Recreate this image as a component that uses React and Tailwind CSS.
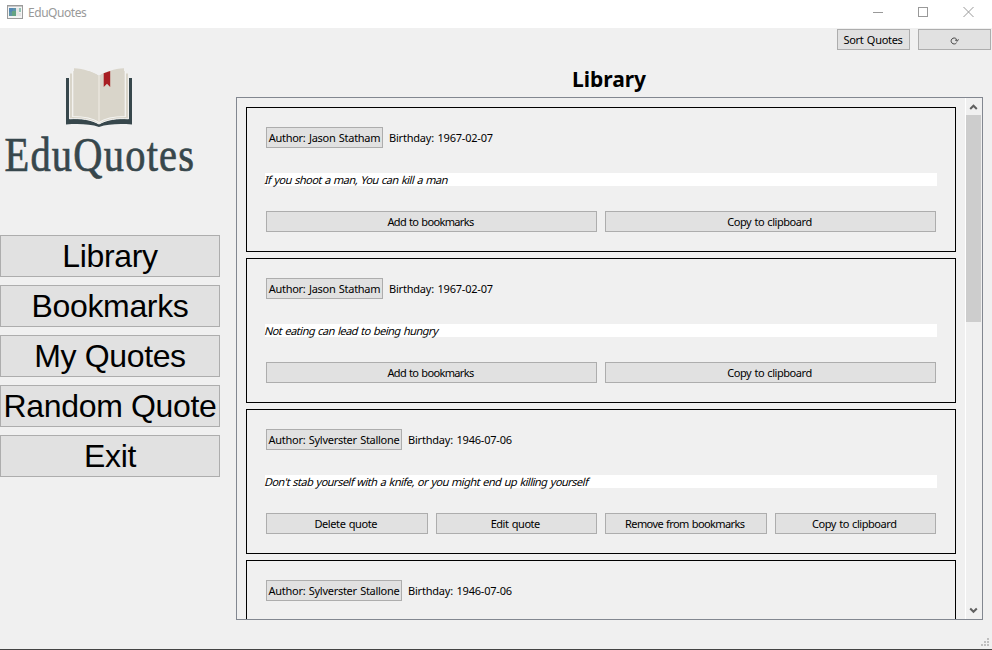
const NAV = ["Library", "Bookmarks", "My Quotes", "Random Quote", "Exit"];

const ADD = { label: "Add to bookmarks", tracking: "tracking-[-0.65px]" };
const COPY = { label: "Copy to clipboard", tracking: "tracking-[-0.45px]" };
const OWN = [
  { label: "Delete quote", tracking: "tracking-[-0.4px]" },
  { label: "Edit quote", tracking: "tracking-[-0.45px]" },
  { label: "Remove from bookmarks", tracking: "tracking-[-0.6px]" },
  COPY,
];

const QUOTES = [
  { author: "Jason Statham", width: "w-[117px]", birthday: "1967-02-07", text: "If you shoot a man, You can kill a man", actions: [ADD, COPY] },
  { author: "Jason Statham", width: "w-[117px]", birthday: "1967-02-07", text: "Not eating can lead to being hungry", actions: [ADD, COPY] },
  { author: "Sylverster Stallone", width: "w-[136px]", birthday: "1946-07-06", text: "Don't stab yourself with a knife, or you might end up killing yourself", actions: OWN },
  { author: "Sylverster Stallone", width: "w-[136px]", birthday: "1946-07-06", text: "", actions: [] },
];

function Button({ className = "", children }) {
  return (
    <button className={`flex h-[21px] items-center justify-center whitespace-nowrap border border-[#adadad] bg-[#e1e1e1] [word-spacing:0.8px] ${className}`}>
      {children}
    </button>
  );
}

function TitleBar() {
  return (
    <header className="flex h-7 shrink-0 items-start bg-white">
      <svg className="ml-[7px] mt-[5px] shrink-0" width="16" height="14" viewBox="0 0 16 14" shapeRendering="crispEdges">
        <rect x="0.5" y="0.5" width="15" height="13" fill="#f4f4f4" stroke="#9b9b9b" />
        <rect x="1" y="1" width="14" height="1" fill="#c9c9c9" />
        <rect x="2" y="3" width="8" height="8" fill="#5f93a8" />
        <rect x="2" y="3" width="4" height="4" fill="#5387b5" />
        <rect x="5" y="6" width="4" height="5" fill="#64a383" />
        <rect x="9" y="3" width="3" height="8" fill="#e6e6e6" />
        <rect x="12" y="3" width="2" height="4" fill="#93c3b5" />
        <rect x="12" y="8" width="2" height="3" fill="#e3e3e3" />
      </svg>
      <span className="ml-[5px] mt-[5px] text-[12px] leading-4 tracking-[-0.45px] text-[#999999]">EduQuotes</span>
      <svg className="ml-auto mt-[6px]" width="120" height="12" viewBox="0 0 120 12" fill="none" stroke="#999999">
        <path d="M1 6.5H11" />
        <rect x="46.500" y="1.500" width="9" height="9" />
        <path d="M91.500 1L101.500 11M101.500 1L91.500 11" />
      </svg>
    </header>
  );
}

function Logo() {
  return (
    <svg className="mt-[38px] block" width="220" height="120" viewBox="0 66 220 120">
      <path d="M66 78H69V119C80 118 91 119.500 99 124C107 119.500 118 118 129 119V78H132V124.500C119 123.500 108 124 99 127C90 124 79 123.500 66 124.500Z" fill="#37474c" />
      <path d="M69.500 73H128.500V118.800C117 118 107 119.500 99 124C91 119.500 81 118 69.500 118.800Z" fill="#d9d5ca" stroke="#f0f0ef" strokeWidth="1" />
      <path d="M72.700 71V116.500C83 116.500 92 117.500 99 122.500C106 117.500 115 116.500 125.300 116.500V71" fill="#d9d5ca" stroke="#f5f5f3" strokeWidth="1.200" />
      <path d="M72 66H126V68.300H124C114 69 106 71.500 99 76C92 71.500 84 69 74 68.300H72Z" fill="#f0f0f0" />
      <path d="M74 68.300C84 69 92 71.500 99 76C106 71.500 114 69 124 68.300V114.300C114 115 106 117 99 121.300C92 117 84 115 74 114.300Z" fill="#d9d5ca" />
      <path d="M99 76V121" stroke="#e8e5dd" strokeWidth="1.500" />
      <path d="M103.700 73.200L110.200 71V87L107 83.800L103.700 87Z" fill="#a81e22" />
      <text transform="translate(4.500 170.500) scale(0.825 1)" fontSize="49" fill="#37474c" stroke="#37474c" strokeWidth="0.700" className="font-['Liberation_Serif',serif] tracking-[1.5px]">
        EduQuotes
      </text>
    </svg>
  );
}

function QuoteCard({ quote }) {
  return (
    <article className="flex h-[145px] shrink-0 flex-col border border-black px-[18px] pt-[19px]">
      <div className="flex h-[21px] items-center gap-[6px] pl-px">
        <Button className={`tracking-[-0.28px] ${quote.width}`}>Author: {quote.author}</Button>
        <span className="tracking-[-0.2px] [word-spacing:0.8px]">Birthday: {quote.birthday}</span>
      </div>
      <p className="mt-[25px] h-[13px] shrink-0 whitespace-nowrap bg-white tracking-[-0.51px] [word-spacing:0.8px]">
        <span className="inline-block -skew-x-[14deg]">{quote.text}</span>
      </p>
      <div className="mt-[25px] flex gap-2 px-px">
        {quote.actions.map((a) => (
          <Button key={a.label} className={`min-w-0 flex-1 pr-[2px] ${a.tracking}`}>{a.label}</Button>
        ))}
      </div>
    </article>
  );
}

function ScrollBar() {
  return (
    <div className="flex w-[17px] shrink-0 flex-col border-l border-white bg-[#f0f0f0]">
      <svg className="h-[17px] w-4 shrink-0" viewBox="0 0 16 17" fill="none" stroke="#606060" strokeWidth="2">
        <path d="M4.200 11L7.500 7.700L10.800 11" />
      </svg>
      <div className="h-[207px] w-[15px] bg-[#cdcdcd]" />
      <svg className="mt-auto h-[17px] w-4 shrink-0" viewBox="0 0 16 17" fill="none" stroke="#606060" strokeWidth="2">
        <path d="M4.200 6.500L7.500 9.800L10.800 6.500" />
      </svg>
    </div>
  );
}

export default function App() {
  return (
    <div className="flex h-[650px] w-[992px] flex-col overflow-hidden border-b border-[#444444] bg-[#f0f0f0] font-['Noto_Sans',sans-serif] text-[11px] leading-[13px] tracking-[-0.1px] text-black">
      <TitleBar />
      <div className="flex min-h-0 flex-1">
        <aside className="flex w-[220px] shrink-0 flex-col">
          <Logo />
          <nav className="mt-[49px] flex flex-col gap-2">
            {NAV.map((label) => (
              <button key={label} className="flex h-[42px] items-center justify-center whitespace-nowrap border border-[#adadad] bg-[#e1e1e1] font-['Liberation_Sans',sans-serif] text-[32px] leading-none tracking-[-0.35px]">
                {label}
              </button>
            ))}
          </nav>
        </aside>
        <main className="ml-4 flex min-w-0 flex-1 flex-col">
          <div className="flex justify-end gap-2 pr-px pt-px">
            <Button className="w-[73px] pr-px tracking-[-0.3px]">Sort Quotes</Button>
            <Button className="w-[73px]">
              <svg className="mt-px" width="9" height="9" viewBox="0 0 9 9" fill="none" stroke="#444444">
                <path d="M6.600 6.700A3 3 0 1 1 7.100 4.500M8.800 3.500L7.100 5.200L5 3.800" />
              </svg>
            </Button>
          </div>
          <h1 className="mt-4 h-[31px] pr-[10px] text-center text-[21px] leading-[27px] font-bold tracking-normal">Library</h1>
          <section className="mr-[9px] flex h-[523px] border border-[#828790]">
            <div className="flex min-w-0 flex-1 flex-col gap-[6px] overflow-hidden pl-[9px] pr-[9px] pt-[9px]">
              {QUOTES.map((q, i) => (
                <QuoteCard key={i} quote={q} />
              ))}
            </div>
            <ScrollBar />
          </section>
          <svg className="mt-auto mb-[2px] mr-[2px] self-end" width="9" height="9" viewBox="0 0 9 9" fill="#bfbfbf" shapeRendering="crispEdges">
            <path d="M6 0h2v2h-2zM3 3h2v2h-2zM6 3h2v2h-2zM0 6h2v2h-2zM3 6h2v2h-2zM6 6h2v2h-2z" />
          </svg>
        </main>
      </div>
    </div>
  );
}
